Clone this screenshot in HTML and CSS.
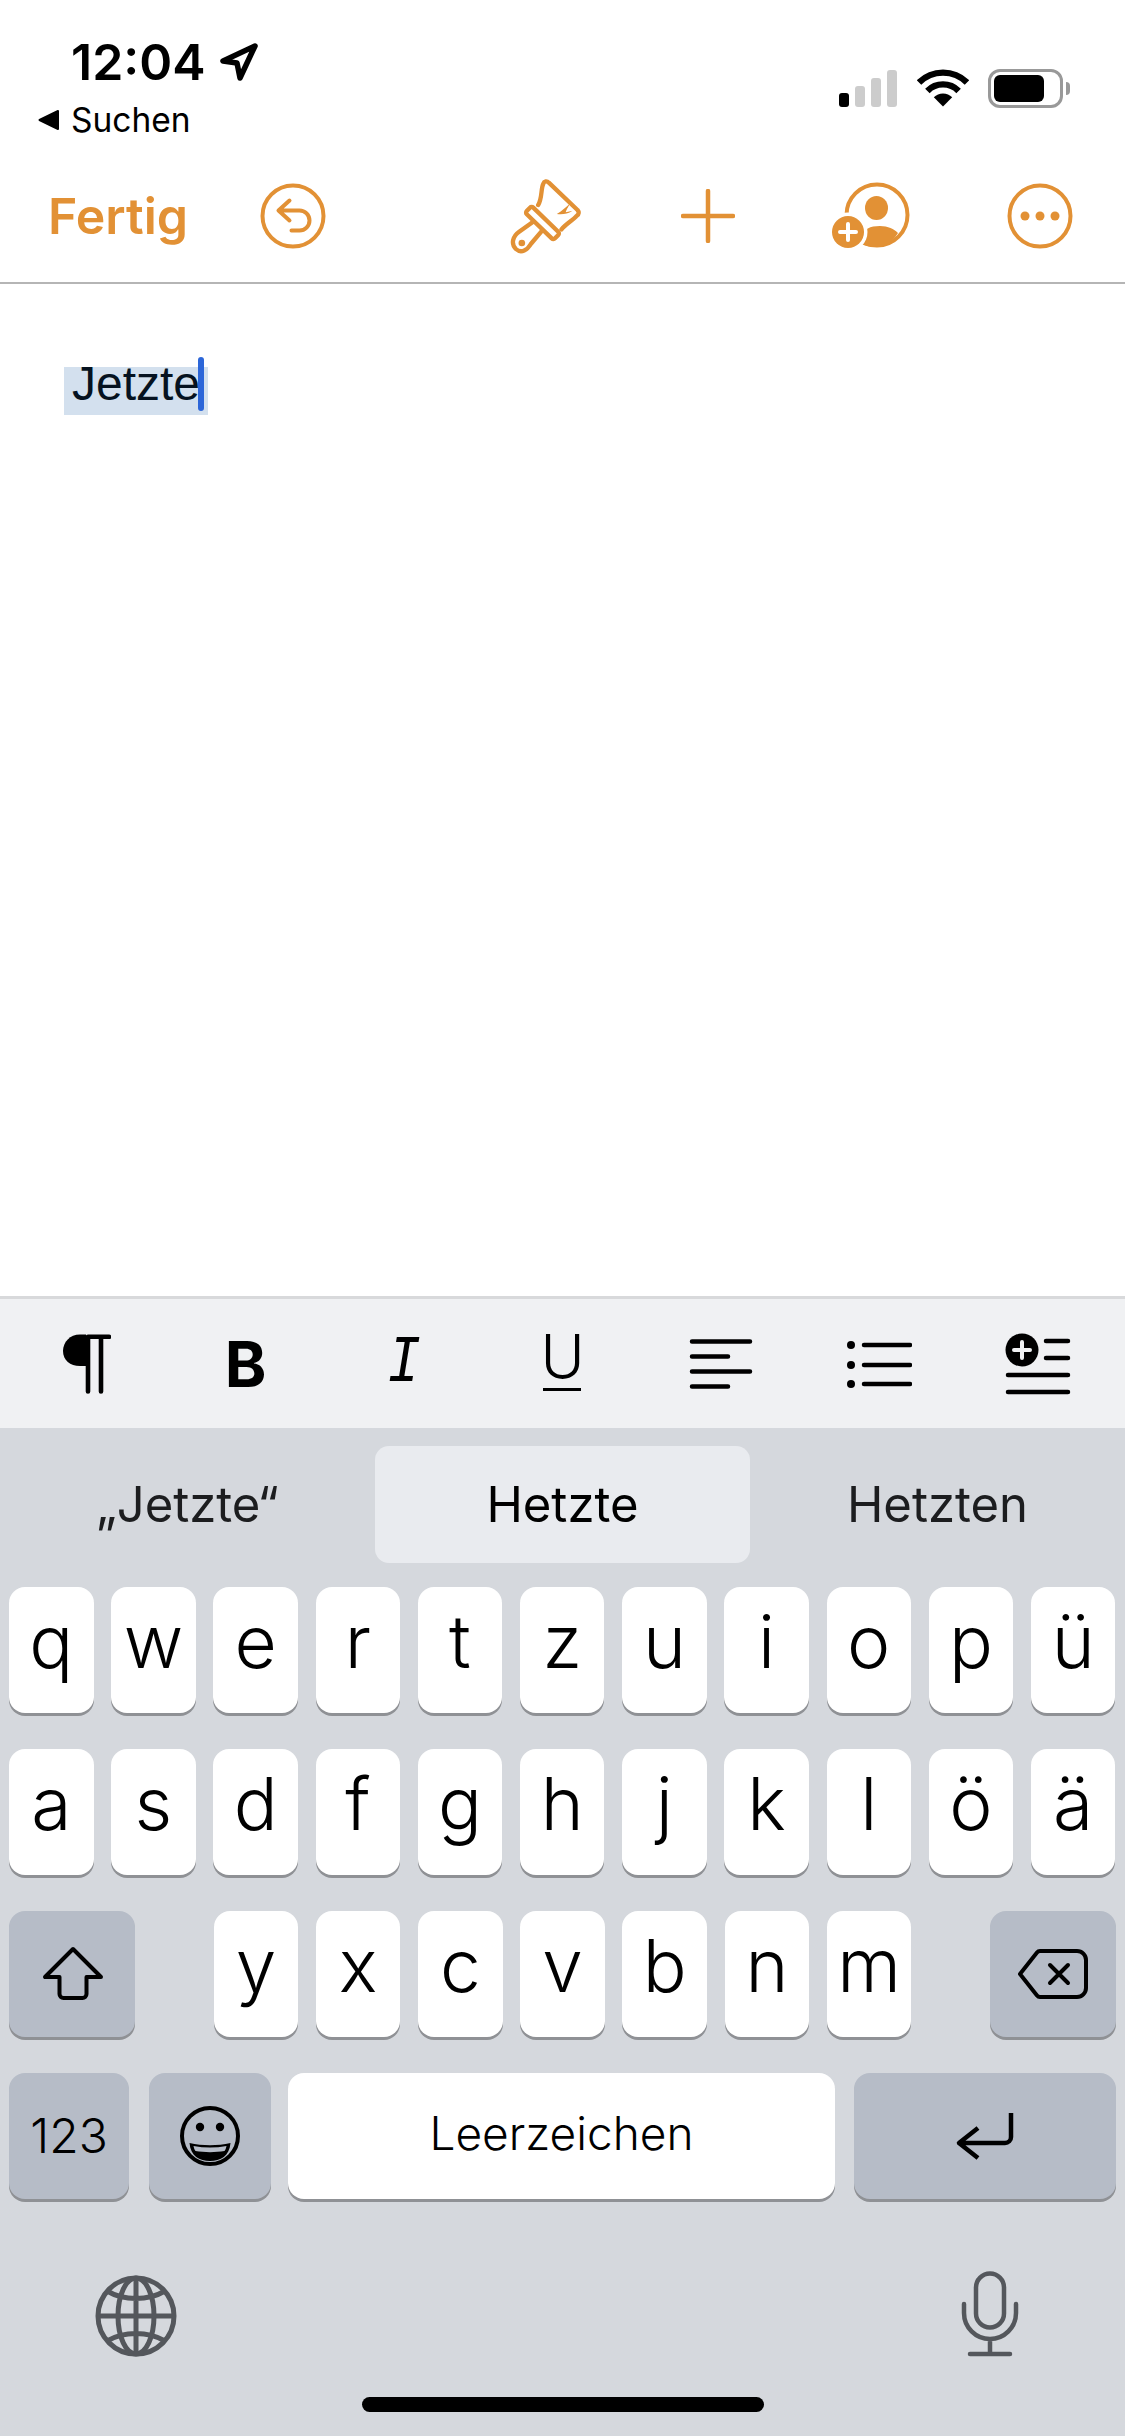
FILE: index.html
```html
<!DOCTYPE html>
<html lang="de">
  <head>
    <meta charset="UTF-8" />
    <meta name="viewport" content="width=device-width, initial-scale=1.0" />
    <title>Pages</title>
    <link rel="stylesheet" href="styles.css">
  </head>
  <body>
    <div class="phone">
      <div class="status">
        <div class="status-left">
          <div class="time-row">
            <span class="time">12:04</span>
            <svg class="loc" width="38" height="38" viewBox="0 0 38 38"><path d="M35 3 3 18l14 2 3 15z" fill="none" stroke="#000" stroke-width="5.5" stroke-linejoin="round"/></svg>
          </div>
          <div class="back-row">
            <svg class="back-arrow" width="22" height="22" viewBox="0 0 22 22"><path d="M1.500 11 20 2v18z" fill="#000" stroke="#000" stroke-width="2" stroke-linejoin="round"/></svg>
            <span class="back-text">Suchen</span>
          </div>
        </div>
        <div class="status-right">
          <svg width="60" height="38" viewBox="0 0 60 38">
            <rect x="0" y="24" width="10" height="14" rx="3" fill="#000"/>
            <rect x="16" y="17" width="10" height="21" rx="3" fill="#ccc"/>
            <rect x="32" y="9" width="10" height="29" rx="3" fill="#ccc"/>
            <rect x="48" y="1" width="10" height="37" rx="3" fill="#ccc"/>
          </svg>
          <svg width="52" height="38" viewBox="0 0 52 38">
            <path d="M2 13.500a34 34 0 0 1 48 0M10.400 21.900a22 22 0 0 1 31.200 0" fill="none" stroke="#000" stroke-width="6.400"/>
            <path d="M26 37.500 16.800 28.300a13 13 0 0 1 18.400 0z" fill="#000"/>
          </svg>
          <div class="battery"><div class="battery-fill"></div></div>
          <div class="battery-nub"></div>
        </div>
      </div>

      <div class="nav">
        <span class="done">Fertig</span>
        <svg class="nav-undo" width="66" height="66" viewBox="0 0 66 66" fill="none" stroke="#e29135" stroke-width="4" stroke-linecap="round" stroke-linejoin="round">
          <circle cx="33" cy="33" r="30.500"/>
          <path d="M29.500 17.500 18.500 27.500l11 10M18.500 27.500H39.500a10 10 0 0 1 0 20H31.500"/>
        </svg>
        <svg class="nav-brush" width="72" height="75" viewBox="35 25 215 225" fill="none" stroke="#e29135" stroke-width="13" stroke-linecap="round" stroke-linejoin="round">
          <path d="M122 103C134 85 130 55 137 40 140 31 148 30 154 36L240 118C245 124 245 130 238 135 225 150 205 160 192 176"/>
          <rect x="76" y="143" width="118" height="28" rx="7" transform="rotate(44 135 157)"/>
          <path d="M107 153 65 183C45 197 40 220 55 235 72 250 90 237 100 220L132 182"/>
          <circle cx="73" cy="217" r="10" fill="#e29135" stroke="none"/>
          <path d="M178 130C195 120 205 110 218 98 212 110 205 120 205 125L225 120C210 130 195 132 178 130z" fill="#e29135" stroke="none"/>
        </svg>
        <svg class="nav-plus" width="54" height="54" viewBox="0 0 54 54" fill="none" stroke="#e29135" stroke-width="4.500" stroke-linecap="round"><path d="M27 2v50M2 27h50"/></svg>
        <svg class="nav-person" width="80" height="68" viewBox="0 0 80 68">
          <circle cx="46" cy="33" r="30.500" fill="none" stroke="#e29135" stroke-width="4"/>
          <ellipse cx="45.500" cy="26" rx="11.500" ry="12" fill="#e29135"/>
          <path d="M30 54c3-7 9-10 19-10 8 0 14 3 18 7-6 10-15 14-24 14-7 0-13-3-17-6z" fill="#e29135"/>
          <circle cx="17" cy="50" r="19.500" fill="#fff"/>
          <circle cx="17" cy="50" r="16" fill="#e29135"/>
          <path d="M17 42v16M9 50h16" stroke="#fff" stroke-width="4" stroke-linecap="round"/>
        </svg>
        <svg class="nav-more" width="66" height="66" viewBox="0 0 66 66">
          <circle cx="33" cy="33" r="30.500" fill="none" stroke="#e29135" stroke-width="4"/>
          <circle cx="18" cy="33" r="4.500" fill="#e29135"/>
          <circle cx="33" cy="33" r="4.500" fill="#e29135"/>
          <circle cx="48" cy="33" r="4.500" fill="#e29135"/>
        </svg>
      </div>

      <div class="doc">
        <span class="selection">Jetzte<i class="caret"></i></span>
      </div>

      <div class="toolbar">
        <div class="tool">
          <svg width="48" height="60" viewBox="0 0 48 60">
            <path d="M23 .5H17C7 .5 0 8 0 17S7 32 17 32h6z"/>
            <path d="M25 3v54.500M38 3v54.500M25 2.800h21" stroke="#000" stroke-width="4.600" stroke-linecap="round"/>
          </svg>
        </div>
        <div class="tool"><span class="tool-bold">B</span></div>
        <div class="tool"><span class="tool-italic">I</span></div>
        <div class="tool"><span class="tool-under">U</span></div>
        <div class="tool">
          <svg width="64" height="50" viewBox="0 0 64 50" stroke="#000" stroke-width="4.500" stroke-linecap="round"><path d="M3 2.500h58M3 17.500h36M3 32.500h58M3 47.500h36"/></svg>
        </div>
        <div class="tool">
          <svg width="66" height="48" viewBox="0 0 66 48">
            <circle cx="5" cy="5" r="4"/><circle cx="5" cy="25" r="4"/><circle cx="5" cy="44" r="4"/>
            <path d="M18 5h46M18 25h46M18 44h46" stroke="#000" stroke-width="4.500" stroke-linecap="round"/>
          </svg>
        </div>
        <div class="tool">
          <svg width="66" height="62" viewBox="0 0 66 62">
            <circle cx="17" cy="17" r="16.500"/>
            <path d="M17 9v16M9 17h16" stroke="#f0f1f3" stroke-width="4" stroke-linecap="round"/>
            <path d="M41 8h22M41 25h22M3 42h60M3 59h60" stroke="#000" stroke-width="4.500" stroke-linecap="round"/>
          </svg>
        </div>
      </div>

      <div class="keyboard">
        <div class="suggestions">
          <div class="suggestion">„Jetzte“</div>
          <div class="suggestion suggestion-active">Hetzte</div>
          <div class="suggestion">Hetzten</div>
        </div>

        <div class="key-row">
          <div class="key">q</div><div class="key">w</div><div class="key">e</div><div class="key">r</div><div class="key">t</div><div class="key">z</div><div class="key">u</div><div class="key">i</div><div class="key">o</div><div class="key">p</div><div class="key">ü</div>
        </div>
        <div class="key-row">
          <div class="key">a</div><div class="key">s</div><div class="key">d</div><div class="key">f</div><div class="key">g</div><div class="key">h</div><div class="key">j</div><div class="key">k</div><div class="key">l</div><div class="key">ö</div><div class="key">ä</div>
        </div>
        <div class="key-row key-row-third">
          <div class="key key-gray key-shift">
            <svg width="62" height="56" viewBox="0 0 62 56" fill="none" stroke="#000" stroke-width="4" stroke-linejoin="round"><path d="M31 3 3 31h14.500v17a4 4 0 0 0 4 4h19a4 4 0 0 0 4-4V31H59z"/></svg>
          </div>
          <div class="letters">
            <div class="key">y</div><div class="key">x</div><div class="key">c</div><div class="key">v</div><div class="key">b</div><div class="key">n</div><div class="key">m</div>
          </div>
          <div class="key key-gray key-delete">
            <svg width="70" height="50" viewBox="0 0 70 50" fill="none" stroke="#000" stroke-width="4" stroke-linecap="round" stroke-linejoin="round"><path d="M22 2h37a9 9 0 0 1 9 9v28a9 9 0 0 1-9 9H22a4 4 0 0 1-3-1.500L2 25 19 3.500A4 4 0 0 1 22 2z"/><path d="M32 16l18 18M50 16 32 34"/></svg>
          </div>
        </div>
        <div class="key-row key-row-fourth">
          <div class="key key-gray key-num">123</div>
          <div class="key key-gray key-emoji">
            <svg width="62" height="62" viewBox="0 0 62 62">
              <circle cx="31" cy="31" r="28" fill="none" stroke="#000" stroke-width="4"/>
              <circle cx="21" cy="22" r="4.200"/><circle cx="41" cy="22" r="4.200"/>
              <path d="M10.500 38c13 3 28 3 41 0-1 13-10 18-20.500 18S11.500 51 10.500 38z"/>
              <path d="M14.500 41c11 2 22 2 33 0-.5 2-1 4-2 5-9 1.500-20 1.500-29 0-1-1-1.500-3-2-5z" fill="#b6bcc7"/>
            </svg>
          </div>
          <div class="key key-space">Leerzeichen</div>
          <div class="key key-gray key-return">
            <svg width="60" height="50" viewBox="0 0 60 50" fill="none" stroke="#000" stroke-width="4.500" stroke-linejoin="round"><path d="M56 2v24a6 6 0 0 1-6 6H4M23 17 4 32l19 15"/></svg>
          </div>
        </div>

        <div class="kb-bottom">
          <svg class="globe" width="82" height="82" viewBox="0 0 82 82" fill="none" stroke="#54575c" stroke-width="5">
            <circle cx="41" cy="41" r="38"/>
            <ellipse cx="41" cy="41" rx="18" ry="38"/>
            <path d="M41 3v76M3 41h76M12 16c17 10 41 10 58 0M12 66c17-10 41-10 58 0"/>
          </svg>
          <svg width="58" height="86" viewBox="0 0 58 86" fill="none" stroke="#54575c" stroke-width="4.500" stroke-linecap="round">
            <rect x="15" y="2.500" width="28" height="54" rx="14"/>
            <path d="M3 33v9a26 26 0 0 0 52 0v-9M29 68v15M9 83h40"/>
          </svg>
        </div>
        <div class="home-indicator"></div>
      </div>
    </div>
  </body>
</html>
```

FILE: styles.css
```css
* {
  margin: 0;
  padding: 0;
  box-sizing: border-box;
}

body {
  font-family: Inter, "Liberation Sans", sans-serif;
  background-color: #fff;
  color: #000;
}

.phone {
  width: 1125px;
  height: 2436px;
  display: flex;
  flex-direction: column;
  overflow: hidden;
}

/* status bar */
.status {
  height: 152px;
  display: flex;
  justify-content: space-between;
}

.status-left {
  padding-top: 37px;
}

.time-row {
  display: flex;
  align-items: center;
  gap: 14px;
  padding-left: 71px;
  height: 50px;
}

.time {
  font-size: 50px;
  line-height: 50px;
  font-weight: 600;
}

.back-row {
  display: flex;
  align-items: center;
  gap: 11px;
  padding-left: 38px;
  margin-top: 15px;
  height: 36px;
}

.back-text {
  font-size: 33.500px;
  line-height: 36px;
}

.status-right {
  display: flex;
  align-items: flex-start;
  padding-top: 69px;
  padding-right: 55px;
}

.status-right svg:first-child {
  margin-right: 18px;
}

.battery {
  width: 75px;
  height: 39px;
  margin-left: 19px;
  padding: 3px;
  border: 3px solid #999;
  border-radius: 12px;
}

.battery-fill {
  width: 50px;
  height: 27px;
  background-color: #000;
  border-radius: 6px;
}

.battery-nub {
  width: 4px;
  height: 13px;
  margin: 13px 0 0 3px;
  background-color: #999;
  border-radius: 0 6px 6px 0;
}

/* nav bar */
.nav {
  height: 132px;
  display: flex;
  align-items: center;
  padding-left: 48px;
  padding-bottom: 2px;
  border-bottom: 2px solid #b5b5b5;
}

.done {
  font-size: 50px;
  font-weight: 600;
  color: #e29135;
}

.nav-undo {
  margin-left: 72px;
}

.nav-brush {
  margin-left: auto;
}

.nav-plus {
  margin-left: 100px;
}

.nav-person {
  margin-left: 96px;
}

.nav-more {
  margin-left: 96px;
  margin-right: 52px;
}

/* document */
.doc {
  flex: 1;
  padding: 83px 0 0 64px;
}

.selection {
  position: relative;
  display: inline-block;
  width: 144px;
  height: 48px;
  padding-left: 8px;
  background-color: #d3e0ee;
  font-family: "Liberation Sans", Arial, sans-serif;
  font-size: 48px;
  line-height: 34px;
  color: #051220;
}

.caret {
  position: absolute;
  top: -10px;
  right: 4px;
  width: 6px;
  height: 54px;
  background-color: #2c66d8;
  border-radius: 3px;
}

/* formatting toolbar */
.toolbar {
  height: 132px;
  display: grid;
  grid-template-columns: repeat(7, 1fr);
  padding: 0 8px;
  background-color: #f0f1f3;
  border-top: 3px solid #d8d9db;
}

.tool {
  display: flex;
  align-items: center;
  justify-content: center;
}

.tool-bold {
  font-size: 63px;
  font-weight: 750;
  line-height: 62px;
}

.tool-italic {
  font-family: "Liberation Mono", monospace;
  font-style: italic;
  font-size: 66px;
  line-height: 66px;
  transform: scaleX(0.85);
}

.tool-under {
  font-size: 60px;
  font-weight: 300;
  line-height: 40px;
  height: 55px;
  width: 38px;
  border-bottom: 3px solid #000;
  display: flex;
  justify-content: center;
}

/* keyboard */
.keyboard {
  height: 1008px;
  display: flex;
  flex-direction: column;
  background-color: #d5d8dd;
  position: relative;
}

.suggestions {
  height: 159px;
  display: grid;
  grid-template-columns: repeat(3, 375px);
  align-items: start;
  padding-top: 18px;
}

.suggestion {
  height: 117px;
  display: flex;
  align-items: center;
  justify-content: center;
  font-size: 49px;
  color: #1c1d1f;
  border-radius: 14px;
}

.suggestion-active {
  background-color: #e9ebef;
  color: #000;
}

.key-row {
  display: flex;
  gap: 17.700px;
  padding: 0 9px;
  margin-bottom: 36px;
}

.key {
  width: 84.500px;
  height: 126px;
  display: flex;
  align-items: center;
  justify-content: center;
  background-color: #fff;
  border-radius: 16px;
  box-shadow: 0 3px 0 #8f9195;
  font-size: 73px;
  font-weight: 350;
  line-height: 1;
  padding-bottom: 17px;
}

.key-row-third {
  justify-content: space-between;
}

.letters {
  display: flex;
  gap: 17.700px;
}

.key-gray {
  background-color: #b6bcc7;
  padding-bottom: 0;
}

.key-shift,
.key-delete {
  width: 126px;
}

.key-shift svg {
  margin-left: 2px;
}

.key-row-fourth {
  gap: 0;
  margin-bottom: 0;
}

.key-num {
  width: 120px;
  font-size: 48px;
}

.key-emoji {
  width: 122px;
  margin-left: 20px;
}

.key-space {
  width: 547px;
  margin-left: 17px;
  font-size: 46px;
  padding-bottom: 6px;
}

.key-return {
  width: 262px;
  margin-left: 19px;
}

.kb-bottom {
  display: flex;
  justify-content: space-between;
  align-items: center;
  padding: 0 106px 0 95px;
  margin-top: 72px;
}

.globe {
  margin-top: 4px;
}

.home-indicator {
  position: absolute;
  left: 362px;
  top: 969px;
  width: 402px;
  height: 15px;
  background-color: #000;
  border-radius: 8px;
}
```
